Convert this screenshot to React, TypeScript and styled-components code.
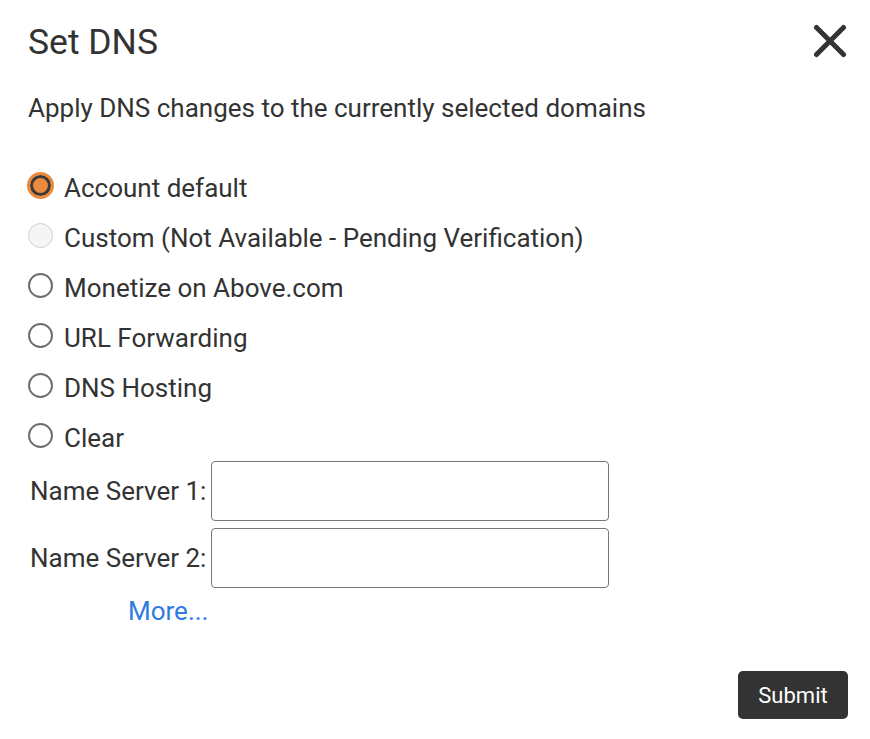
import React from "react";
import styled, { createGlobalStyle } from "styled-components";

const Global = createGlobalStyle`
  html, body { margin: 0; padding: 0; background: #fff; }
  body { font-family: Roboto, "Liberation Sans", Arial, sans-serif; color: #333; }
`;

const Dialog = styled.div`
  width: 870px;
  min-height: 739px;
  box-sizing: border-box;
  padding: 20px 22px 0 28px;
  display: flex;
  flex-direction: column;
`;

const Header = styled.div`
  display: flex;
  align-items: center;
  justify-content: space-between;
`;

const Title = styled.h1`
  margin: 0;
  font-size: 35.5px;
  line-height: 44px;
  font-weight: 400;
  color: #333;
`;

const CloseButton = styled.button`
  border: 0;
  background: none;
  padding: 0;
  width: 36px;
  height: 36px;
  display: flex;
  align-items: center;
  justify-content: center;
  cursor: pointer;
`;

const Description = styled.p`
  margin: 29px 0 0;
  font-size: 26px;
  line-height: 30px;
`;

const Options = styled.div`
  margin-top: 40px;
  display: flex;
  flex-direction: column;
`;

const OptionRow = styled.label`
  display: flex;
  align-items: center;
  height: 50px;
  font-size: 26px;
  gap: 11px;
  color: #333;
`;

type DotState = "checked" | "disabled" | "empty";

const RadioDot = styled.span<{ $state: DotState }>`
  box-sizing: border-box;
  border-radius: 50%;
  flex: none;
  margin-top: -5px;
  ${({ $state }) =>
    $state === "checked"
      ? `width: 27px; height: 27px; margin-left: -1px; margin-right: -1px;
         background: #ea8a3c; border: 3px solid #ea8a3c; box-shadow: inset 0 0 0 3px #3a3a3a;`
      : $state === "disabled"
      ? `width: 25px; height: 25px; background: #f5f5f5; border: 1.5px solid #cfcfcf;`
      : `width: 25px; height: 25px; background: #fff; border: 2px solid #6e6e6e;`}
`;

const Servers = styled.div`
  margin-top: -2px;
  display: flex;
  flex-direction: column;
  gap: 7px;
`;

const ServerRow = styled.div`
  display: flex;
  align-items: center;
  gap: 5px;
  margin-left: 2px;
`;

const ServerLabel = styled.span`
  font-size: 26px;
  width: 176px;
  white-space: nowrap;
`;

const ServerInput = styled.input`
  width: 398px;
  height: 60px;
  box-sizing: border-box;
  border: 1.5px solid #767676;
  border-radius: 4px;
  font-size: 20px;
  padding: 0 10px;
  outline: none;
`;

const MoreLink = styled.a`
  margin: 8px 0 0 100px;
  font-size: 26px;
  line-height: 30px;
  color: #2f7be0;
  text-decoration: none;
  align-self: flex-start;
`;

const Footer = styled.div`
  display: flex;
  justify-content: flex-end;
  margin-top: 45px;
`;

const SubmitButton = styled.button`
  width: 110px;
  height: 48px;
  border: 0;
  border-radius: 5px;
  background: #333;
  color: #fff;
  font-family: Roboto, "Liberation Sans", Arial, sans-serif;
  font-size: 22px;
  cursor: pointer;
`;

const options: { label: string; state: DotState }[] = [
  { label: "Account default", state: "checked" },
  { label: "Custom (Not Available - Pending Verification)", state: "disabled" },
  { label: "Monetize on Above.com", state: "empty" },
  { label: "URL Forwarding", state: "empty" },
  { label: "DNS Hosting", state: "empty" },
  { label: "Clear", state: "empty" },
];

export default function App() {
  return (
    <>
      <Global />
      <Dialog>
        <Header>
          <Title>Set DNS</Title>
          <CloseButton aria-label="Close">
            <svg width="36" height="36" viewBox="0 0 36 36">
              <path d="M4.5 3.5 L31.5 30.5 M31.5 3.5 L4.5 30.5" stroke="#333" strokeWidth="5" strokeLinecap="round" fill="none" />
            </svg>
          </CloseButton>
        </Header>
        <Description>Apply DNS changes to the currently selected domains</Description>
        <Options>
          {options.map((o) => (
            <OptionRow key={o.label}>
              <RadioDot $state={o.state} />
              <span>{o.label}</span>
            </OptionRow>
          ))}
        </Options>
        <Servers>
          <ServerRow>
            <ServerLabel>Name Server 1:</ServerLabel>
            <ServerInput />
          </ServerRow>
          <ServerRow>
            <ServerLabel>Name Server 2:</ServerLabel>
            <ServerInput />
          </ServerRow>
        </Servers>
        <MoreLink href="#">More...</MoreLink>
        <Footer>
          <SubmitButton>Submit</SubmitButton>
        </Footer>
      </Dialog>
    </>
  );
}
